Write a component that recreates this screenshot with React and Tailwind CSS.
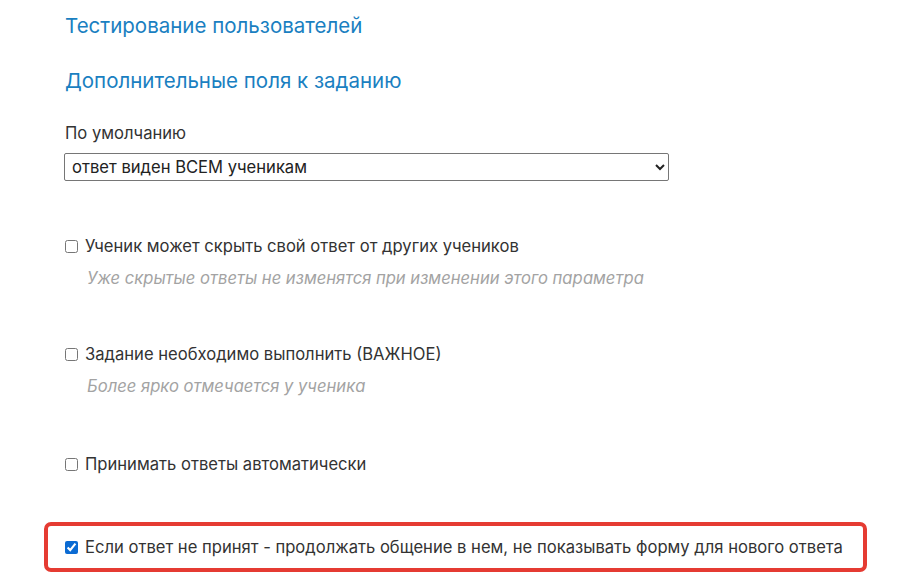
import React from "react";

function Option({ label, hint, checked }) {
  return (
    <div>
      <label className="flex items-center text-[16.6px] text-[#333333] leading-[20px]">
        <input
          type="checkbox"
          defaultChecked={checked}
          className="w-[13px] h-[13px] m-0 mr-[7px] accent-[#0b6bd3]"
        />
        {label}
      </label>
      {hint && (
        <p className="pl-[22px] mt-[12px] text-[16.6px] italic text-[#a3a3a3] leading-[20px]">
          {hint}
        </p>
      )}
    </div>
  );
}

export default function App() {
  return (
    <div
      className="w-[906px] h-[586px] overflow-hidden bg-white"
      style={{ fontFamily: "Inter, 'Noto Sans', sans-serif" }}
    >
      <div className="pl-[65px] pt-[13px]">
        <h2 className="text-[20.5px] text-[#1a7fc1] leading-[26px]">
          Тестирование пользователей
        </h2>
        <h2 className="mt-[29px] text-[20.5px] text-[#1a7fc1] leading-[26px]">
          Дополнительные поля к заданию
        </h2>

        <div className="mt-[29px]">
          <div className="text-[16.6px] text-[#333333] leading-[20px]">По умолчанию</div>
          <select className="mt-[10px] ml-[-1px] w-[605px] h-[28px] border border-[#767676] rounded-[2px] px-[3px] text-[16.6px] text-[#222222] bg-white">
            <option>ответ виден ВСЕМ ученикам</option>
          </select>
        </div>

        <div className="mt-[55px]">
          <Option
            label="Ученик может скрыть свой ответ от других учеников"
            hint="Уже скрытые ответы не изменятся при изменении этого параметра"
          />
        </div>
        <div className="mt-[56px]">
          <Option
            label="Задание необходимо выполнить (ВАЖНОЕ)"
            hint="Более ярко отмечается у ученика"
          />
        </div>
        <div className="mt-[58px]">
          <Option label="Принимать ответы автоматически" />
        </div>
      </div>

      <div className="ml-[44px] mt-[48px] w-[823px] h-[50px] border-4 border-[#e53b32] rounded-[7px] flex items-center pl-[17px]">
        <Option
          label="Если ответ не принят - продолжать общение в нем, не показывать форму для нового ответа"
          checked
        />
      </div>
    </div>
  );
}
